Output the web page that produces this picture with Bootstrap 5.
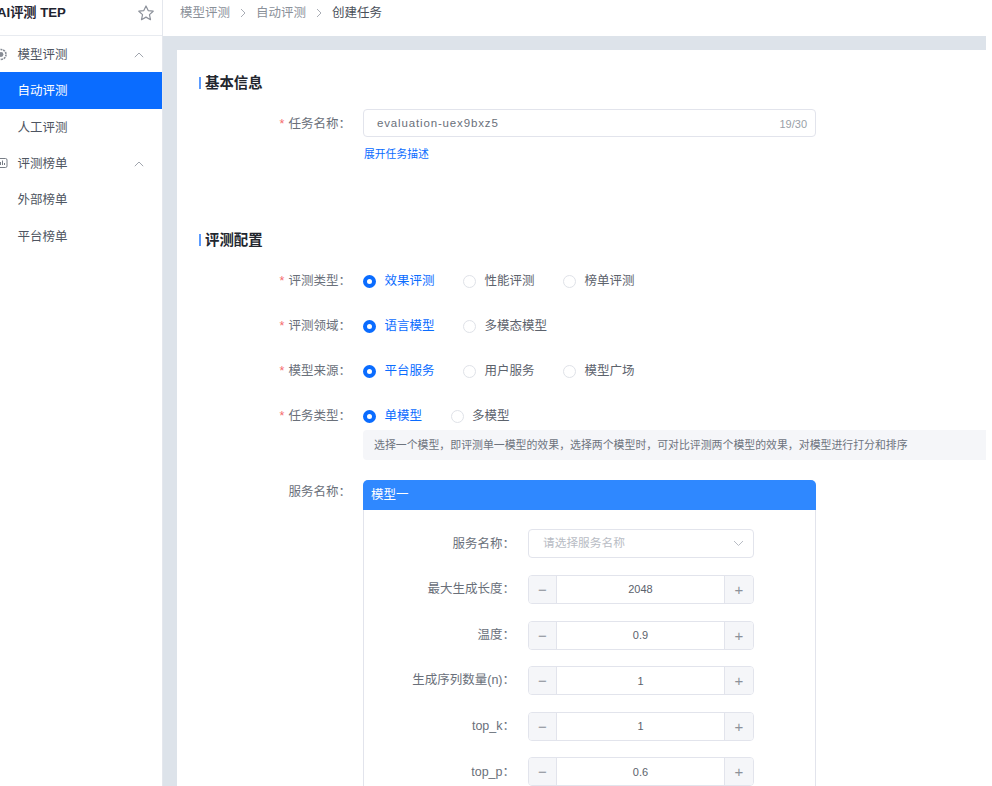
<!DOCTYPE html>
<html lang="zh"><head><meta charset="utf-8">
<link href="https://cdn.jsdelivr.net/npm/bootstrap@5.3.0/dist/css/bootstrap.min.css" rel="stylesheet">
<style>
html,body{height:786px;overflow:hidden;}
body{font-family:"Liberation Sans","Noto Sans CJK SC",sans-serif;font-size:12.5px;color:#41464f;background:#fff;}
.app-wrap{width:986px;height:786px;}
.side{width:163px;flex:none;border-right:1px solid #e4e7ed;}
.brand{height:36px;border-bottom:1px solid #e8ebf0;font-size:13.2px;font-weight:700;color:#1f2430;margin-left:-3px;padding:0 7px 10px 0;}
.menu-row{height:36.4px;padding:2px 18px 0 17.5px;position:relative;font-size:12.5px;color:#4e5561;}
.menu-row.on{background:#0a6cff;color:#fff;}
.menu-ico{position:absolute;left:-1px;top:12px;}
.mainarea{flex:1;min-width:0;display:flex;flex-direction:column;}
.crumbs{height:36px;padding:0 0 10px 17px;gap:10px;font-size:12.5px;color:#8a9099;flex:none;}
.crumbs .cur{color:#4a505a;}
.bgzone{flex:1;background:#dde3ea;padding:14px 0 0 14px;min-height:0;}
.panel{background:#fff;height:100%;padding:25px 0 0 22px;}
.sec-title{font-size:14.4px;font-weight:700;color:#22262e;line-height:16px;padding-left:6px;position:relative;}
.sec-title::before{content:"";position:absolute;left:0;top:2px;width:2px;height:12px;background:#5b9bff;}
.form-line{display:flex;}
.lab{width:164px;flex:none;text-align:right;padding-right:12px;color:#6a707a;line-height:18px;}
.req{color:#f56c6c;margin-right:4px;}
.name-box{width:453px;height:28px;border:1px solid #e2e4ec;border-radius:4px;padding:2px 8px 0 13px;font-size:11.5px;letter-spacing:.85px;color:#6a707a;}
.cnt{color:#9a9fa8;font-size:11px;letter-spacing:0;}
.tlink{color:#0a6cff;font-size:10.8px;line-height:14px;margin-top:10px;padding-left:1px;}
.radio-set{display:flex;align-items:center;}
.rd{display:flex;align-items:center;color:#5c626c;line-height:18px;margin-right:28.5px;}
.rd i{width:13px;height:13px;border-radius:50%;border:1px solid #dfe2e8;margin-right:8.5px;background:#fff;flex:none;}
.rd.on{color:#0a6cff;}
.rd.on i{border:4px solid #0a6cff;}
.hint{width:623px;height:30px;margin-top:5px;background:#f5f6f9;border-radius:4px 0 0 4px;padding-left:11px;font-size:10.9px;color:#6e747e;}
.m-card{width:453px;height:400px;border:1px solid #e2e4ec;border-radius:6px 6px 0 0;}
.m-head{height:30px;background:#2f88ff;color:#fff;border-radius:5px 5px 0 0;padding-left:8px;margin:-1px -1px 0;}
.m-line{display:flex;align-items:center;height:30px;margin-bottom:15.6px;}
.m-lab{width:164px;flex:none;text-align:right;padding-right:13px;color:#6a707a;}
.sel{width:226px;height:29px;margin-top:-2px;border:1px solid #e2e4ec;border-radius:4px;padding:0 9px 0 14px;color:#b8bcc4;font-size:11.7px;}
.stepper{width:226px;height:29px;border:1px solid #e2e4ec;border-radius:4px;overflow:hidden;}
.stp{width:28px;flex:none;background:#f5f6f9;color:#8c919a;font-size:15px;line-height:1;}
.stp:first-child{width:27px;}
.stv{flex:1;border-left:1px solid #e2e4ec;border-right:1px solid #e2e4ec;font-size:11px;color:#5c626c;}
.sec-a{margin-top:18px;}
.mt-a{margin-top:6px;}
.sec-b{margin-top:71px;}
.line1{margin-top:24px;}
.line2{margin-top:27px;}
.line3{margin-top:20px;}
.line3 > .lab{margin-top:3px;}
.m-body{padding-top:19px;}
</style></head>
<body>
<div class="app-wrap d-flex">
 <aside class="side">
  <div class="brand d-flex align-items-center justify-content-between">
   <span>AI评测 TEP</span>
   <svg width="18" height="18" viewBox="0 0 24 24" fill="none" stroke="#8d929b" stroke-width="1.6" stroke-linejoin="round"><path d="M12 2.6l2.9 6.2 6.7.8-5 4.6 1.4 6.7-6-3.4-6 3.4 1.4-6.7-5-4.6 6.7-.8z"/></svg>
  </div>
  <div class="menu-row d-flex align-items-center justify-content-between">
   <svg class="menu-ico" width="9" height="13" viewBox="0 0 9 13" fill="#868b94"><circle cx="2" cy="6.5" r="5" fill="none" stroke="#868b94" stroke-width="1.6" stroke-dasharray="2 .8"/><circle cx="2" cy="6.5" r="2.4"/></svg>
   <span>模型评测</span>
   <svg width="10" height="6" viewBox="0 0 10 6" fill="none" stroke="#a0a5ad" stroke-width="1"><path d="M.8 5.2L5 1l4.2 4.2"/></svg>
  </div>
  <div class="menu-row on d-flex align-items-center"><span>自动评测</span></div>
  <div class="menu-row d-flex align-items-center"><span>人工评测</span></div>
  <div class="menu-row d-flex align-items-center justify-content-between">
   <svg class="menu-ico" width="9" height="12" viewBox="0 0 9 12" fill="none" stroke="#777d86"><rect x="-3" y="1.5" width="11" height="9" rx="1.5"/><path d="M1.5 8V5M3.5 8V3.5M5.5 8V6"/></svg>
   <span>评测榜单</span>
   <svg width="10" height="6" viewBox="0 0 10 6" fill="none" stroke="#a0a5ad" stroke-width="1"><path d="M.8 5.2L5 1l4.2 4.2"/></svg>
  </div>
  <div class="menu-row d-flex align-items-center"><span>外部榜单</span></div>
  <div class="menu-row d-flex align-items-center"><span>平台榜单</span></div>
 </aside>
 <div class="mainarea">
  <div class="crumbs d-flex align-items-center">
   <span>模型评测</span>
   <svg width="6" height="10" viewBox="0 0 6 10" fill="none" stroke="#a9adb5"><path d="M1 1l4 4-4 4"/></svg>
   <span>自动评测</span>
   <svg width="6" height="10" viewBox="0 0 6 10" fill="none" stroke="#a9adb5"><path d="M1 1l4 4-4 4"/></svg>
   <span class="cur">创建任务</span>
  </div>
  <div class="bgzone">
   <div class="panel">
    <div class="sec-title">基本信息</div>
    <div class="form-line sec-a">
     <div class="lab mt-a"><span class="req">*</span>任务名称：</div>
     <div>
      <div class="name-box d-flex align-items-center justify-content-between"><span>evaluation-uex9bxz5</span><span class="cnt">19/30</span></div>
      <div class="tlink">展开任务描述</div>
     </div>
    </div>
    <div class="sec-title sec-b">评测配置</div>
    <div class="form-line line1"><div class="lab"><span class="req">*</span>评测类型：</div><div class="radio-set"><div class="rd on"><i></i>效果评测</div><div class="rd"><i></i>性能评测</div><div class="rd"><i></i>榜单评测</div></div></div>
    <div class="form-line line2"><div class="lab"><span class="req">*</span>评测领域：</div><div class="radio-set"><div class="rd on"><i></i>语言模型</div><div class="rd"><i></i>多模态模型</div></div></div>
    <div class="form-line line2"><div class="lab"><span class="req">*</span>模型来源：</div><div class="radio-set"><div class="rd on"><i></i>平台服务</div><div class="rd"><i></i>用户服务</div><div class="rd"><i></i>模型广场</div></div></div>
    <div class="form-line line2"><div class="lab"><span class="req">*</span>任务类型：</div>
     <div><div class="radio-set"><div class="rd on"><i></i>单模型</div><div class="rd"><i></i>多模型</div></div>
     <div class="hint d-flex align-items-center">选择一个模型，即评测单一模型的效果，选择两个模型时，可对比评测两个模型的效果，对模型进行打分和排序</div></div></div>
    <div class="form-line line3"><div class="lab">服务名称：</div>
     <div class="m-card">
      <div class="m-head d-flex align-items-center">模型一</div>
      <div class="m-body">
       <div class="m-line"><div class="m-lab">服务名称：</div><div class="sel d-flex align-items-center justify-content-between"><span>请选择服务名称</span><svg width="11" height="7" viewBox="0 0 11 7" fill="none" stroke="#b8bcc4"><path d="M1 1l4.5 4.5L10 1"/></svg></div></div>
       <div class="m-line"><div class="m-lab">最大生成长度：</div><div class="stepper d-flex"><div class="stp d-flex align-items-center justify-content-center">−</div><div class="stv d-flex align-items-center justify-content-center">2048</div><div class="stp d-flex align-items-center justify-content-center">+</div></div></div>
       <div class="m-line"><div class="m-lab">温度：</div><div class="stepper d-flex"><div class="stp d-flex align-items-center justify-content-center">−</div><div class="stv d-flex align-items-center justify-content-center">0.9</div><div class="stp d-flex align-items-center justify-content-center">+</div></div></div>
       <div class="m-line"><div class="m-lab">生成序列数量(n)：</div><div class="stepper d-flex"><div class="stp d-flex align-items-center justify-content-center">−</div><div class="stv d-flex align-items-center justify-content-center">1</div><div class="stp d-flex align-items-center justify-content-center">+</div></div></div>
       <div class="m-line"><div class="m-lab">top_k：</div><div class="stepper d-flex"><div class="stp d-flex align-items-center justify-content-center">−</div><div class="stv d-flex align-items-center justify-content-center">1</div><div class="stp d-flex align-items-center justify-content-center">+</div></div></div>
       <div class="m-line"><div class="m-lab">top_p：</div><div class="stepper d-flex"><div class="stp d-flex align-items-center justify-content-center">−</div><div class="stv d-flex align-items-center justify-content-center">0.6</div><div class="stp d-flex align-items-center justify-content-center">+</div></div></div>
      </div>
     </div>
    </div>
   </div>
  </div>
 </div>
</div>
<script src="https://cdn.jsdelivr.net/npm/bootstrap@5.3.0/dist/js/bootstrap.bundle.min.js"></script>
</body></html>
